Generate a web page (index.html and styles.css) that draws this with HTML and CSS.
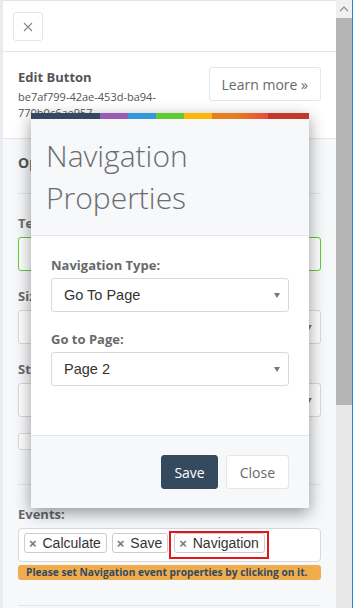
FILE: index.html
```html
<!DOCTYPE html>
<html lang="en">
<head>
<meta charset="UTF-8" />
<meta name="viewport" content="width=device-width, initial-scale=1" />
<title>Edit Button</title>
<link rel="stylesheet" href="styles.css">
</head>
<body>

  <div class="frame">
    <!-- Side panel -->
    <div class="panel">
      <div class="panel-top">
        <button class="btn-x"><svg width="10" height="10" viewBox="0 0 10 10"><path d="M1 1 L9 9 M9 1 L1 9" stroke="#8a8a8a" stroke-width="1.2"/></svg></button>
      </div>

      <div class="panel-info">
        <div class="info-text">
          <div class="info-title">Edit Button</div>
          <div class="info-id">be7af799-42ae-453d-ba94- 770b0c6ae957</div>
        </div>
        <button class="btn-learn">Learn more &raquo;</button>
      </div>

      <div class="panel-body">
        <div class="section-title">Options</div>
        <hr class="divider" />

        <div class="field-label">Text</div>
        <div class="input input-ok"></div>

        <div class="field-label">Size</div>
        <div class="input select-box"><span class="caret"></span></div>

        <div class="field-label">Style</div>
        <div class="input select-box"><span class="caret"></span></div>

        <div class="check-box"></div>
        <hr class="divider divider-low" />

        <div class="field-label">Events:</div>
        <div class="tags">
          <span class="tag"><b>&times;</b> Calculate</span>
          <span class="tag"><b>&times;</b> Save</span>
          <span class="tag-marked"><span class="tag"><b>&times;</b> Navigation</span></span>
        </div>
        <div class="warn">Please set Navigation event properties by clicking on it.</div>
        <hr class="divider divider-end" />
      </div>
    </div>

    <!-- Fake scrollbar -->
    <div class="scrollbar">
      <div class="sb-up"><svg width="10" height="6" viewBox="0 0 10 6"><path d="M1 5 L5 1 L9 5" fill="none" stroke="#8a8a8a" stroke-width="1.2"/></svg></div>
      <div class="sb-thumb"></div>
      <div class="sb-track"></div>
    </div>
  </div>

  <!-- Modal -->
  <div class="modal">
    <div class="stripe">
      <span class="s1"></span><span class="s2"></span><span class="s3"></span><span class="s4"></span><span class="s5"></span><span class="s6"></span><span class="s7"></span>
    </div>
    <div class="modal-head">
      <h2>Navigation Properties</h2>
    </div>
    <div class="modal-body">
      <div class="m-label">Navigation Type:</div>
      <div class="m-select">Go To Page<span class="caret"></span></div>
      <div class="m-label">Go to Page:</div>
      <div class="m-select">Page 2<span class="caret"></span></div>
    </div>
    <div class="modal-foot">
      <button class="btn-save">Save</button>
      <button class="btn-close">Close</button>
    </div>
  </div>

</body>
</html>
```

FILE: styles.css
```css
* {
  margin: 0; padding: 0; box-sizing: border-box;
}
body {
  background: #e9ecf0;
  font-family: 'Open Sans', 'Liberation Sans', sans-serif;
  color: #676a6c;
  width: 353px;
  height: 608px;
  overflow: hidden;
  position: relative;
}
button {
  font-family: inherit;
  cursor: pointer;
}

.frame {
  display: flex;
  height: 608px;
  padding-left: 3px;
}

/* Side panel */
.panel {
  flex: 1;
  background: #f7f8fa;
  border-top: 1px solid #e3e5e8;
  overflow: hidden;
}
.panel-top {
  background: #fff;
  height: 51px;
  border-bottom: 1px solid #e3e5e8;
  padding: 11px 0 0 10px;
}
.btn-x {
  width: 30px;
  height: 29px;
  background: #fff;
  border: 1px solid #e5e6e7;
  border-radius: 3px;
  display: flex;
  align-items: center;
  justify-content: center;
}
.panel-info {
  background: #fff;
  height: 87px;
  border-bottom: 1px solid #e3e5e8;
  display: flex;
  justify-content: space-between;
  padding: 15px 15px 0 15px;
}
.info-text {
  width: 150px;
}
.info-title {
  font-size: 13px;
  font-weight: 700;
  line-height: 18px;
  color: #555;
  margin-top: 1px;
}
.info-id {
  font-size: 11px;
  line-height: 16px;
  color: #555;
  margin-top: 3px;
}
.btn-learn {
  height: 34px;
  padding: 0 12px;
  background: #fff;
  border: 1px solid #e5e6e7;
  border-radius: 3px;
  color: #676a6c;
  font-size: 14px;
}

.panel-body {
  padding: 14px 15px 0 15px;
}
.section-title {
  font-size: 14px;
  font-weight: 700;
  color: #555;
  line-height: 20px;
}
.divider {
  border: 0;
  border-top: 1px solid #e3e5e8;
  margin: 20px 0 20px;
}
.divider-low {
  margin-top: 34px;
}
.divider-end {
  margin-top: 25px;
}
.field-label {
  font-size: 13px;
  font-weight: 700;
  color: #676a6c;
  line-height: 18px;
  margin-bottom: 5px;
}
.input {
  height: 34px;
  background: #fff;
  border: 1px solid #d7d9dc;
  border-radius: 3px;
  margin-bottom: 16px;
  position: relative;
}
.input-ok {
  border-color: #5fcc33;
}
.caret {
  position: absolute;
  right: 8px;
  top: 14px;
  border-left: 3.5px solid transparent;
  border-right: 3.5px solid transparent;
  border-top: 5px solid #777;
}
.check-box {
  width: 60px;
  height: 17px;
  background: #fff;
  border: 1px solid #d7d9dc;
  border-radius: 3px;
}

.tags {
  height: 34px;
  background: #fff;
  border: 1px solid #d7d9dc;
  border-radius: 4px;
  display: flex;
  align-items: flex-start;
  gap: 5px;
  padding: 4px 5px 0;
}
.tag {
  display: inline-block;
  font-family: 'Liberation Sans', Arial, sans-serif;
  font-size: 14px;
  color: #333;
  background: #fff;
  border: 1px solid #ccc;
  border-radius: 3px;
  height: 20px;
  line-height: 18px;
  padding: 0 5px 0 4px;
}
.tag b {
  color: #777;
  font-size: 13px;
  margin-right: 2px;
}
.tag-marked {
  display: inline-flex;
  border: 2px solid #e8141b;
  padding: 0 2px 4px 3px;
  margin: -2px 0 0 -4px;
}
.warn {
  margin-top: 3px;
  background: #f0ad4e;
  color: #34495e;
  font-size: 10.2px;
  font-weight: 700;
  line-height: 15px;
  padding: 0 8px;
  border-radius: 3px;
  white-space: nowrap;
}

/* Scrollbar */
.scrollbar {
  width: 17px;
  display: flex;
  flex-direction: column;
  border-right: 1px solid #1e88e5;
  background: #e8e8e8;
}
.sb-up {
  height: 18px;
  background: #f0f0f0;
  display: flex;
  align-items: center;
  justify-content: center;
}
.sb-thumb {
  height: 387px;
  background: #b5b5b5;
}
.sb-track {
  flex: 1;
}

/* Modal */
.modal {
  position: absolute;
  left: 31px;
  top: 113px;
  width: 278px;
  background: #fff;
  box-shadow: 0 5px 15px rgba(0, 0, 0, 0.4);
}
.stripe {
  display: flex;
  height: 6px;
}
.stripe span { height: 6px; }
.s1 { width: 69px; background: #34495e; }
.s2 { width: 28px; background: #9b59b6; }
.s3 { width: 28px; background: #3498db; }
.s4 { width: 28px; background: #62cb31; }
.s5 { width: 28px; background: #ffb606; }
.s6 { width: 56px; background: linear-gradient(to right, #e67e22 40%, #e74c3c); }
.s7 { flex: 1; background: #c0392b; }

.modal-head {
  background: #f7f8fa;
  border-bottom: 1px solid #e3e5e8;
  padding: 16px 15px 16px;
}
.modal-head h2 {
  font-size: 30px;
  font-weight: 300;
  line-height: 42px;
  color: #6a6c6f;
  width: 200px;
}
.modal-body {
  padding: 20px 20px 49px;
}
.m-label {
  font-size: 13px;
  font-weight: 700;
  color: #676a6c;
  line-height: 18px;
  margin-bottom: 4px;
}
.m-select {
  position: relative;
  height: 34px;
  border: 1px solid #d7d9dc;
  border-radius: 3px;
  font-family: 'Liberation Sans', Arial, sans-serif;
  font-size: 14.5px;
  color: #333;
  line-height: 32px;
  padding-left: 12px;
  margin-bottom: 18px;
}
.m-select:last-child {
  margin-bottom: 0;
}
.modal-foot {
  background: #f7f8fa;
  border-top: 1px solid #e3e5e8;
  padding: 19px 20px 19px;
  display: flex;
  justify-content: flex-end;
  gap: 8px;
}
.btn-save {
  height: 34px;
  padding: 0 12px;
  background: #34495e;
  border: 1px solid #34495e;
  border-radius: 3px;
  color: #fff;
  font-size: 14px;
}
.btn-close {
  height: 34px;
  padding: 0 13px;
  background: #fff;
  border: 1px solid #e5e6e7;
  border-radius: 3px;
  color: #676a6c;
  font-size: 14px;
}
```
